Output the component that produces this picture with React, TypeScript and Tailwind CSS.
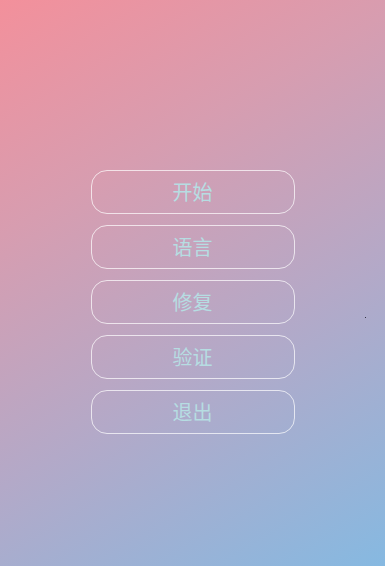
import React from 'react'

const items = ['开始', '语言', '修复', '验证', '退出']

export default function App() {
  return (
    <div
      className="relative flex h-[566px] w-full flex-col items-center gap-[11px] bg-[linear-gradient(150deg,#f3909b_0%,#d79db0_30%,#b3a9c8_62%,#86b9e1_100%)] pt-[170px]"
      style={{ fontFamily: '"Noto Sans CJK SC", "Noto Sans", sans-serif' }}
    >
      {items.map((label) => (
        <button
          key={label}
          className="flex h-[44px] w-[204px] items-center justify-center rounded-[16px] border border-white/70 text-[20px] text-[#b6dde2]"
        >
          {label}
        </button>
      ))}
      <span className="absolute left-[365px] top-[317px] h-[1px] w-[1px] bg-[#334]" />
    </div>
  )
}
